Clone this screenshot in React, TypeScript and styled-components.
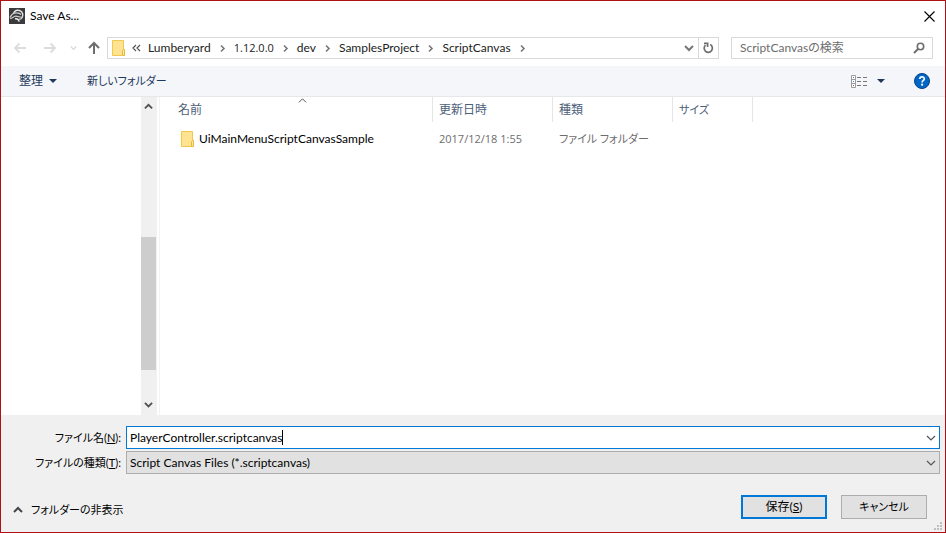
import React from "react";
import styled, { createGlobalStyle } from "styled-components";

const Global = createGlobalStyle`
  *, *::before, *::after { box-sizing: border-box; }
  body { margin: 0; background: #fff; }
  body, button, input, select {
    font-family: Lato, "Noto Sans CJK JP", sans-serif;
    font-size: 12px;
    line-height: 16px;
    font-feature-settings: "palt";
    color: #000;
  }
  button, input, select { margin: 0; padding: 0; border: 0; border-radius: 0; background: none; outline: none; }
  svg { display: block; flex: none; }
`;

const Window = styled.main`
  position: relative;
  display: flex;
  flex-direction: column;
  min-height: 100vh;
  border: 1px solid #b01116;
  background: #fff;
`;

const TitleBar = styled.header`
  display: flex;
  align-items: center;
  height: 30px;
  padding: 0 9px 0 8px;
`;

const Title = styled.h1`
  flex: 1;
  margin: 0 0 0 5px;
  font-size: 12px;
  font-weight: 400;
`;

const NavRow = styled.nav`
  display: flex;
  align-items: center;
  padding: 6px 12px 7px 12px;
`;

const IconButton = styled.button<{ $width: number; $after?: number }>`
  display: flex;
  flex: none;
  align-items: center;
  justify-content: center;
  width: ${(p) => p.$width}px;
  height: 20px;
  margin-right: ${(p) => p.$after ?? 0}px;
`;

const AddressBar = styled.div`
  display: flex;
  flex: 1;
  align-items: center;
  height: 22px;
  padding-left: 4px;
  border: 1px solid #d9d9d9;
`;

const Crumbs = styled.div`
  display: flex;
  flex: 1;
  align-items: center;
  margin-left: 6px;
`;

const Crumb = styled.button<{ $numeric: boolean }>`
  margin-left: 7px;
  color: #222;
  ${(p) => p.$numeric && `font-family: "Open Sans", sans-serif; font-size: 11px;`}
`;

const CrumbArrow = styled.span`
  display: flex;
  justify-content: center;
  width: 9px;
  margin-left: 7px;
`;

const Refresh = styled.div`
  display: flex;
  align-items: center;
  height: 20px;
  border-left: 1px solid #d9d9d9;
`;

const Search = styled.label`
  display: flex;
  align-items: center;
  width: 202px;
  height: 22px;
  margin-left: 12px;
  padding: 0 7px 0 8px;
  border: 1px solid #d9d9d9;
`;

const SearchInput = styled.input`
  flex: 1;
  min-width: 0;
  &::placeholder { color: #6d6d6d; opacity: 1; }
`;

const Toolbar = styled.div`
  display: flex;
  align-items: center;
  height: 31px;
  padding: 0 15px 0 18px;
  border-bottom: 1px solid #e6e7e8;
  background: #f4f6f9;
`;

const Command = styled.button`
  display: flex;
  align-items: center;
  gap: 6px;
  margin-right: 30px;
  color: #1e395b;
`;

const Kana = styled.span`
  font-size: 11px;
`;

const Spacer = styled.div`
  flex: 1;
`;

const Body = styled.section`
  display: flex;
  flex: 1;
`;

const Sidebar = styled.aside`
  display: flex;
  flex: none;
  justify-content: flex-end;
  width: 159px;
  padding-right: 2px;
  border-right: 1px solid #f3f3f3;
`;

const ScrollBar = styled.div`
  display: flex;
  flex-direction: column;
  width: 16px;
  background: #f0f0f0;
`;

const ScrollTrack = styled.div`
  display: flex;
  flex: 1;
  flex-direction: column;
`;

const TrackGap = styled.div<{ $grow: number }>`
  flex: ${(p) => p.$grow};
`;

const Thumb = styled.div`
  flex: 133;
  margin-right: 1px;
  background: #cdcdcd;
`;

const Files = styled.table`
  align-self: flex-start;
  width: 581px;
  margin-left: 12px;
  border-collapse: separate;
  border-spacing: 0;
  table-layout: fixed;
`;

const HeadCell = styled.th<{ $width: number }>`
  position: relative;
  width: ${(p) => p.$width}px;
  height: 25px;
  padding: 0 6px;
  border-right: 1px solid #e5e5e5;
  color: #4c607a;
  font-weight: 400;
  text-align: left;
`;

const SortMark = styled.span`
  position: absolute;
  top: 0;
  left: 50%;
  margin-left: -4px;
`;

const Row = styled.tr`
  & > td { border-top: 6px solid transparent; }
`;

const Cell = styled.td`
  height: 28px;
  padding: 0 6px;
  color: #6d6d6d;
  white-space: nowrap;
`;

const DateText = styled.time`
  font-family: "Open Sans", sans-serif;
  font-size: 11px;
`;

const FileName = styled.span`
  display: flex;
  align-items: center;
  gap: 4px;
  padding-left: 3px;
  color: #000;
`;

const Footer = styled.form`
  padding: 11px 5px 13px 0;
  background: #f0f0f0;
`;

const FieldRow = styled.div`
  display: flex;
  align-items: center;
  margin-bottom: 2px;
`;

const FieldLabel = styled.label`
  width: 120px;
  margin-right: 5px;
  font-size: 11px;
  text-align: right;
  white-space: nowrap;
`;

const NameBox = styled.label`
  display: flex;
  flex: 1;
  align-items: center;
  height: 23px;
  padding-left: 3px;
  border: 1px solid #0078d7;
  background: #fff;
  cursor: text;
`;

const NameInput = styled.input`
  field-sizing: content;
  caret-color: transparent;
`;

const Caret = styled.span`
  width: 1px;
  height: 15px;
  background: #000;
`;

const TypeBox = styled.div`
  position: relative;
  flex: 1;
  height: 23px;
  border: 1px solid #adadad;
  background: #e1e1e1;
`;

const TypeSelect = styled.select`
  width: 100%;
  height: 21px;
  padding-left: 3px;
  appearance: none;
`;

const SelectArrow = styled.span`
  position: absolute;
  top: 0;
  right: 0;
  display: flex;
  align-items: center;
  justify-content: center;
  width: 16px;
  height: 100%;
  pointer-events: none;
`;

const Actions = styled.div`
  display: flex;
  align-items: center;
  margin-top: 21px;
  padding: 0 13px 0 12px;
`;

const FolderToggle = styled.button`
  display: flex;
  align-items: center;
  gap: 8px;
  padding-top: 6px;
  font-size: 11px;
`;

const PushButton = styled.button<{ $primary?: boolean }>`
  width: 86px;
  height: 24px;
  margin-left: 14px;
  border: ${(p) => (p.$primary ? "2px solid #0078d7" : "1px solid #adadad")};
  background: #e1e1e1;
`;

const Grip = styled.span`
  position: absolute;
  right: 3px;
  bottom: 2px;
`;

type Dir = "up" | "down" | "right";
const chevrons: Record<Dir, string> = {
  up: "M1 6 L5 2 L9 6",
  down: "M1 2 L5 6 L9 2",
  right: "M3 1.5 L6 4.5 L3 7.5",
};

function Chevron({ dir, color = "#555", weight = 2, size = 10 }: { dir: Dir; color?: string; weight?: number; size?: number }) {
  const box = dir === "right" ? "0 0 9 9" : "0 0 10 8";
  return (
    <svg width={size} height={dir === "right" ? size : (size * 8) / 10} viewBox={box} fill="none" stroke={color} strokeWidth={weight}>
      <path d={chevrons[dir]} />
    </svg>
  );
}

function Arrow({ dir, color }: { dir: "left" | "right" | "up"; color: string }) {
  const d = {
    left: "M13 7H2M6.5 2.5L2 7L6.5 11.5",
    right: "M1 7H12M7.5 2.5L12 7L7.5 11.5",
    up: "M7 13V2M2 7L7 2L12 7",
  }[dir];
  return (
    <svg width="14" height="14" viewBox="0 0 14 14" fill="none" stroke={color} strokeWidth={dir === "up" ? 2 : 1.8}>
      <path d={d} />
    </svg>
  );
}

function Folder() {
  return (
    <svg width="14" height="16" viewBox="0 0 14 16">
      <path d="M.5 .5H11.5V9.5H12.5V15.5H.5Z" fill="#ffe391" stroke="#f0c850" />
      <path d="M10.5 15V10.5L11.5 9.5H12.5V15.5Z" fill="#ffe9a6" stroke="#e8b93a" />
    </svg>
  );
}

function Triangle() {
  return (
    <svg width="8" height="4" viewBox="0 0 8 4">
      <path d="M0 0H8L4 4Z" fill="#1e395b" />
    </svg>
  );
}

function AppLogo() {
  return (
    <svg width="16" height="16" viewBox="0 0 16 16" fill="none">
      <rect width="16" height="16" fill="#3b3b3d" />
      <path d="M4.8 5C5.4 2.6 8.4 1.6 10.8 2.6C13.6 3.8 14.6 6.6 13.2 9.4" stroke="#e8e8e8" strokeWidth="1.4" />
      <path d="M1 9.4C2.6 6 5 4.6 7.6 4.8C9.6 4.8 11.2 5.4 12 6.6" stroke="#d5d5d5" strokeWidth="1.2" />
      <path d="M1.2 10.6C3.4 10.2 4.4 8.4 6.6 8.2C8.8 8 11 9.4 13.2 9.4C12.6 10.8 11.4 11.4 10 11" stroke="#cfcfcf" strokeWidth="1.2" />
      <path d="M6 10.8C8 10.4 9.6 11.4 10.2 13.6" stroke="#ededed" strokeWidth="1.4" />
    </svg>
  );
}

const crumbs = ["Lumberyard", "1.12.0.0", "dev", "SamplesProject", "ScriptCanvas"];
const gripDots = [[6, 0], [3, 3], [6, 3], [0, 6], [3, 6], [6, 6]];

export default function App() {
  return (
    <>
      <Global />
      <Window>
        <TitleBar>
          <AppLogo />
          <Title>Save As...</Title>
          <IconButton $width={13} aria-label="閉じる">
            <svg width="11" height="11" viewBox="0 0 11 11" stroke="#000" strokeWidth="1.1">
              <path d="M.5 .5L10.5 10.5M10.5 .5L.5 10.5" />
            </svg>
          </IconButton>
        </TitleBar>

        <NavRow>
          <IconButton $width={14} $after={16} aria-label="戻る"><Arrow dir="left" color="#dcdcdc" /></IconButton>
          <IconButton $width={14} $after={10} aria-label="進む"><Arrow dir="right" color="#dcdcdc" /></IconButton>
          <IconButton $width={12} $after={8} aria-label="履歴"><Chevron dir="down" color="#dcdcdc" size={7} /></IconButton>
          <IconButton $width={14} $after={6} aria-label="上へ"><Arrow dir="up" color="#6e6e6e" /></IconButton>
          <AddressBar>
            <Folder />
            <Crumbs>
              <svg width="9" height="8" viewBox="0 0 9 8" fill="none" stroke="#555" strokeWidth="1.2">
                <path d="M4 1L1 4L4 7M8 1L5 4L8 7" />
              </svg>
              {crumbs.map((name) => (
                <React.Fragment key={name}>
                  <Crumb $numeric={/^[\d.]+$/.test(name)}>{name}</Crumb>
                  <CrumbArrow><Chevron dir="right" color="#777" size={9} weight={1.6} /></CrumbArrow>
                </React.Fragment>
              ))}
            </Crumbs>
            <IconButton $width={18} aria-label="以前の場所"><Chevron dir="down" color="#777" /></IconButton>
            <Refresh>
              <IconButton $width={19} aria-label="更新">
                <svg width="11" height="12" viewBox="0 0 11 12" fill="none" stroke="#6e6e6e" strokeWidth="1.7">
                  <path d="M7.2 2.6A4.1 4.1 0 1 1 2.5 3.2" />
                  <path d="M1 1.4H4.6V5" />
                </svg>
              </IconButton>
            </Refresh>
          </AddressBar>
          <Search>
            <SearchInput type="search" placeholder="ScriptCanvasの検索" aria-label="検索" />
            <svg width="12" height="12" viewBox="0 0 12 12" fill="none" stroke="#6e6e6e">
              <circle cx="7.5" cy="4.5" r="3.2" strokeWidth="1.6" />
              <path d="M5 7L1 11" strokeWidth="2" />
            </svg>
          </Search>
        </NavRow>

        <Toolbar>
          <Command>整理<Triangle /></Command>
          <Command><Kana>新しいフォルダー</Kana></Command>
          <Spacer />
          <IconButton $width={16} aria-label="表示">
            <svg width="16" height="13" viewBox="0 0 16 13">
              <path d="M.5 .5H4.5V12.5H.5ZM.5 4.5H4.5M.5 8.5H4.5" fill="#fff" stroke="#9a9a9a" />
              <path d="M2 2h1v1h-1z" fill="#777" />
              <path d="M2 6h1v1h-1z" fill="#2a8ae0" />
              <path d="M2 10h1v1h-1z" fill="#c33" />
              <path d="M6 2.5H10M12 2.5H16M6 6.5H10M12 6.5H16M6 10.5H10M12 10.5H16" stroke="#777" />
            </svg>
          </IconButton>
          <IconButton $width={28} $after={19} aria-label="表示方法"><Triangle /></IconButton>
          <IconButton $width={16} aria-label="ヘルプ">
            <svg width="16" height="16" viewBox="0 0 16 16">
              <circle cx="8" cy="8" r="7.5" fill="#0067c8" stroke="#0a3f86" />
              <path d="M5.8 6C5.8 3.2 10.3 3.2 10.3 5.8C10.3 7.5 8.1 7.3 8.1 9.6" fill="none" stroke="#fff" strokeWidth="1.7" />
              <circle cx="8.1" cy="11.7" r="1.1" fill="#fff" />
            </svg>
          </IconButton>
        </Toolbar>

        <Body>
          <Sidebar>
            <ScrollBar>
              <IconButton $width={15} aria-label="上にスクロール"><Chevron dir="up" color="#505050" size={9} /></IconButton>
              <ScrollTrack>
                <TrackGap $grow={120} />
                <Thumb />
                <TrackGap $grow={25} />
              </ScrollTrack>
              <IconButton $width={15} aria-label="下にスクロール"><Chevron dir="down" color="#505050" size={9} /></IconButton>
            </ScrollBar>
          </Sidebar>
          <Files>
            <thead>
              <tr>
                <HeadCell $width={261}>
                  名前
                  <SortMark><Chevron dir="up" weight={1.1} size={9} /></SortMark>
                </HeadCell>
                <HeadCell $width={120}>更新日時</HeadCell>
                <HeadCell $width={120}>種類</HeadCell>
                <HeadCell $width={80}><Kana>サイズ</Kana></HeadCell>
              </tr>
            </thead>
            <tbody>
              <Row>
                <Cell><FileName><Folder />UiMainMenuScriptCanvasSample</FileName></Cell>
                <Cell><DateText>2017/12/18 1:55</DateText></Cell>
                <Cell><Kana>ファイル フォルダー</Kana></Cell>
                <Cell />
              </Row>
            </tbody>
          </Files>
        </Body>

        <Footer onSubmit={(e) => e.preventDefault()}>
          <FieldRow>
            <FieldLabel htmlFor="file-name">ファイル名(<u>N</u>):</FieldLabel>
            <NameBox>
              <NameInput id="file-name" defaultValue="PlayerController.scriptcanvas" />
              <Caret />
              <Spacer />
              <IconButton type="button" $width={16} aria-label="候補"><Chevron dir="down" weight={1.2} /></IconButton>
            </NameBox>
          </FieldRow>
          <FieldRow>
            <FieldLabel htmlFor="file-type">ファイルの種類(<u>T</u>):</FieldLabel>
            <TypeBox>
              <TypeSelect id="file-type">
                <option>Script Canvas Files (*.scriptcanvas)</option>
              </TypeSelect>
              <SelectArrow><Chevron dir="down" weight={1.2} /></SelectArrow>
            </TypeBox>
          </FieldRow>
          <Actions>
            <FolderToggle type="button"><Chevron dir="up" color="#444" />フォルダーの非表示</FolderToggle>
            <Spacer />
            <PushButton type="submit" $primary>保存(<u>S</u>)</PushButton>
            <PushButton type="button"><Kana>キャンセル</Kana></PushButton>
          </Actions>
        </Footer>
        <Grip>
          <svg width="8" height="8" viewBox="0 0 8 8" fill="#bfbfbf">
            {gripDots.map(([x, y]) => <rect key={`${x}-${y}`} x={x} y={y} width="2" height="2" />)}
          </svg>
        </Grip>
      </Window>
    </>
  );
}
